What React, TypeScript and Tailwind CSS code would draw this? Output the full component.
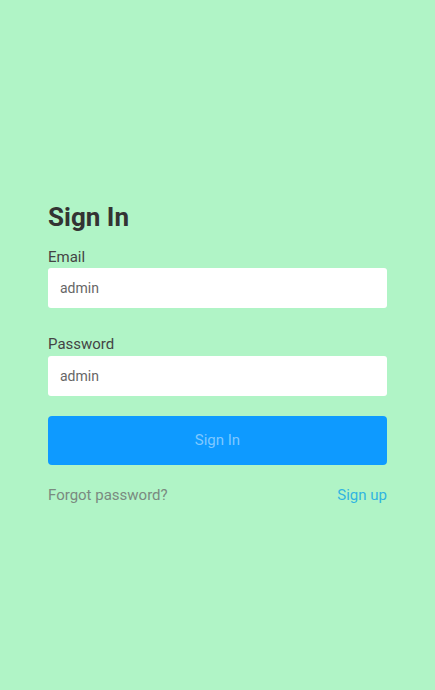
export default function App() {
  return (
    <div className="min-h-screen w-full bg-[#b0f4c6] flex flex-col justify-center px-12 pt-4 font-['Roboto',sans-serif]">
      <form className="flex flex-col w-full" onSubmit={(e) => e.preventDefault()}>
        <h1 className="text-[26px] font-bold text-[#333] leading-8 mb-[14px]">Sign In</h1>

        <label className="text-[15px] text-[#444] leading-5 mb-px">Email</label>
        <input
          type="text"
          placeholder="admin"
          className="h-10 bg-white rounded-[3px] px-3 text-[14px] text-[#333] placeholder:text-[#666] outline-none"
        />

        <label className="text-[15px] text-[#444] leading-5 mt-[26px] mb-[2px]">Password</label>
        <input
          type="password"
          placeholder="admin"
          className="h-10 bg-white rounded-[3px] px-3 text-[14px] text-[#333] placeholder:text-[#666] outline-none"
        />

        <button
          type="submit"
          className="mt-5 h-[49px] rounded-[4px] bg-[#0e9aff] text-[#7fc8ff] text-[15px]"
        >
          Sign In
        </button>

        <div className="flex justify-between items-center mt-5 leading-5 text-[15px]">
          <span className="text-[#7a8a80]">Forgot password?</span>
          <span className="text-[#30b4e0]">Sign up</span>
        </div>
      </form>
    </div>
  )
}
